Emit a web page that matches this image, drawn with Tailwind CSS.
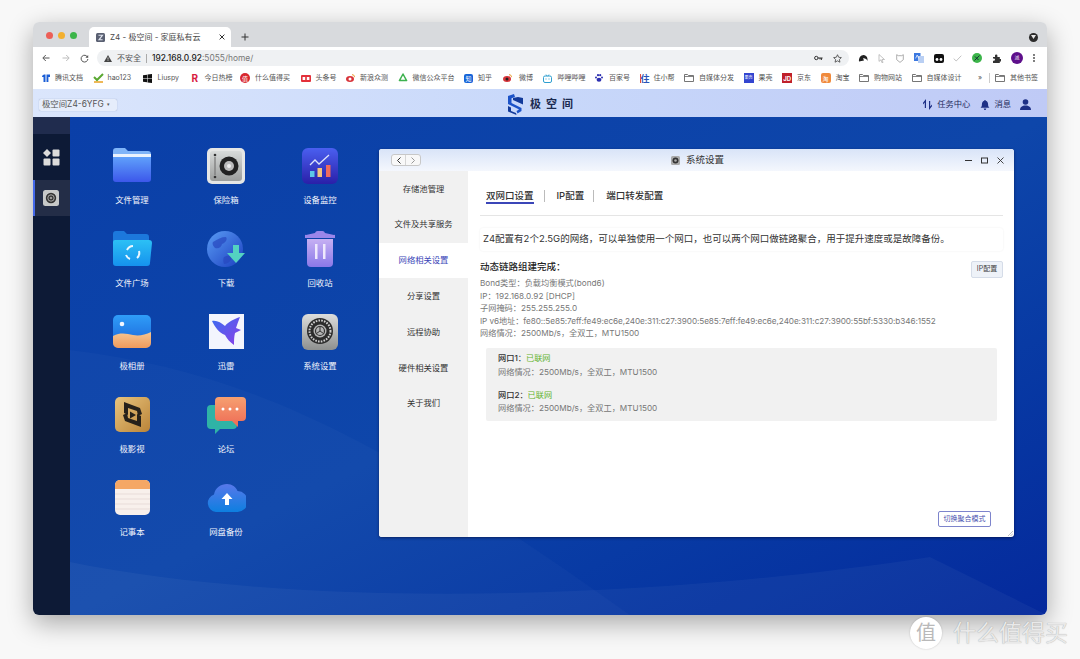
<!DOCTYPE html>
<html lang="zh-CN">
<head>
<meta charset="UTF-8">
<title>Z4 - 极空间 - 家庭私有云</title>
<script src="https://cdn.jsdelivr.net/npm/@tailwindcss/browser@4"></script>
</head>
<body class="bg-[#f8f8f8] font-['Inter','Noto_Sans_CJK_SC',sans-serif] overflow-hidden">
<div class="relative w-[1080px] h-[659px] pt-[22px] pl-[33px] overflow-hidden">

  <!-- Browser window -->
  <div class="w-[1014px] h-[593px] rounded-[6px] overflow-hidden flex flex-col shadow-[0_8px_26px_rgba(0,0,0,0.33)]">

    <!-- Tab strip -->
    <div class="h-[25px] bg-[#d8dadd] flex items-end shrink-0 relative">
      <div class="flex gap-[5px] items-center absolute left-[12.5px] top-[9.5px]">
        <span class="w-[7px] h-[7px] rounded-full bg-[#ec5f57]"></span>
        <span class="w-[7px] h-[7px] rounded-full bg-[#f3b02f]"></span>
        <span class="w-[7px] h-[7px] rounded-full bg-[#3cb54a]"></span>
      </div>
      <div class="ml-[56px] w-[142px] h-[20px] bg-white rounded-t-[5px] flex items-center pl-[7px] pr-[6px]">
        <svg class="w-[9px] h-[9px]" viewBox="0 0 9 9"><rect width="9" height="9" rx="1.5" fill="#5a6072"/><path d="M2.5 2.2h4L3 6.8h3.6" stroke="#dfe3ee" stroke-width="1.1" fill="none"/></svg>
        <span class="ml-[5px] text-[8px] text-[#4a4a4a] flex-1 whitespace-nowrap">Z4 - 极空间 - 家庭私有云</span>
        <svg class="w-[6px] h-[6px]" viewBox="0 0 6 6"><path d="M.6.6l4.8 4.8M5.4.6L.6 5.4" stroke="#333" stroke-width="1"/></svg>
      </div>
      <svg class="ml-[10px] mb-[6px] w-[8px] h-[8px]" viewBox="0 0 8 8"><path d="M4 .5v7M.5 4h7" stroke="#333" stroke-width="1"/></svg>
      <span class="absolute right-[9px] top-[10.5px] w-[9px] h-[9px] rounded-full bg-[#2b2b2b] flex items-center justify-center">
        <svg class="w-[5px] h-[4px]" viewBox="0 0 5 4"><path d="M0 0h5L2.5 4z" fill="#e8e8e8"/></svg>
      </span>
    </div>

    <!-- Address bar -->
    <div class="h-[20px] bg-white flex items-center shrink-0 pt-[2px] pl-[9px] pr-[12px]">
      <svg class="w-[8px] h-[8px]" viewBox="0 0 8 8"><path d="M7.5 4H1M3.8 1L.8 4l3 3" stroke="#555" stroke-width="1" fill="none"/></svg>
      <svg class="ml-[12px] w-[8px] h-[8px]" viewBox="0 0 8 8"><path d="M.5 4H7M4.2 1l3 3-3 3" stroke="#bcbcbc" stroke-width="1" fill="none"/></svg>
      <svg class="ml-[10px] w-[9px] h-[9px]" viewBox="0 0 9 9"><path d="M7.6 3.2A3.4 3.4 0 1 0 7.9 5" stroke="#555" stroke-width="1" fill="none"/><path d="M8.2 .9v2.8H5.4z" fill="#555"/></svg>
      <div class="ml-[8px] w-[752px] h-[16px] rounded-full bg-[#eff1f3] flex items-center pl-[7px] pr-[7px]">
        <svg class="w-[8px] h-[7px]" viewBox="0 0 8 7"><path d="M4 0l4 7H0z" fill="#444"/><path d="M4 2.4v2.2M4 5.2v.7" stroke="#fff" stroke-width=".7"/></svg>
        <span class="ml-[5px] text-[8px] text-[#555]">不安全</span>
        <span class="ml-[5px] w-px h-[9px] bg-[#aaa]"></span>
        <span class="ml-[5px] text-[8.4px] text-[#777] flex-1"><span class="text-[#222] font-medium">192.168.0.92</span>:5055/home/</span>
        <svg class="w-[9px] h-[6px]" viewBox="0 0 9 6"><circle cx="2.3" cy="3" r="1.7" fill="none" stroke="#333" stroke-width="1"/><path d="M4 3h4.600M7.400 3v2M6 3v1.400" stroke="#333" stroke-width="1"/></svg>
        <svg class="ml-[10px] w-[9px] h-[9px]" viewBox="0 0 10 10"><path d="M5 .8l1.300 2.800 3 .4-2.200 2.100.6 3L5 7.600 2.300 9.100l.6-3L.7 4l3-.4z" fill="none" stroke="#444" stroke-width=".9"/></svg>
      </div>
      <div class="ml-[9px] flex items-center flex-1 justify-between">
        <svg class="w-[10px] h-[8px]" viewBox="0 0 10 8"><path d="M1 7.500C.5 3.500 3.500.5 6.500 1.200 9 1.800 9.800 4 9.500 7 8.800 5 7 4 5 4.300L6 6.500z" fill="#222"/></svg>
        <svg class="w-[8px] h-[9px]" viewBox="0 0 8 9"><path d="M1 .5l5.500 5H4l1 3-1 .3-1-3-2 1.600z" fill="none" stroke="#aaa" stroke-width=".7"/></svg>
        <svg class="w-[8px] h-[9px]" viewBox="0 0 8 9"><path d="M.7.7l1.600 1h3.400L7.300.7v5L4 8.400.7 5.700z" fill="none" stroke="#999" stroke-width=".8"/></svg>
        <svg class="w-[10px] h-[10px]" viewBox="0 0 10 10"><rect width="6.500" height="8" fill="#3b78e0"/><rect x="4" y="3" width="6" height="7" fill="#b9cff3"/><path d="M1.600 5.400L3.200 2l1.500 3.400" stroke="#fff" stroke-width=".7" fill="none"/></svg>
        <svg class="w-[10px] h-[9px]" viewBox="0 0 10 9"><rect width="10" height="9" rx="2" fill="#111"/><circle cx="3" cy="5.500" r="1.400" fill="#fff"/><circle cx="7" cy="5.500" r="1.400" fill="#fff"/></svg>
        <svg class="w-[9px] h-[7px]" viewBox="0 0 9 7"><path d="M.7 3.600L3.200 6 8.300.7" fill="none" stroke="#bbb" stroke-width=".9"/></svg>
        <span class="w-[10px] h-[10px] rounded-full bg-[#3cb54a] flex items-center justify-center"><svg class="w-[6px] h-[6px]" viewBox="0 0 6 6"><path d="M.5 5.500L5.500.5M1 1.500l3.500 3.500" stroke="#123" stroke-width=".9"/></svg></span>
        <svg class="w-[9px] h-[9px]" viewBox="0 0 9 9"><path d="M1 3h2V1.600a1.200 1.200 0 0 1 2.400 0V3h2.400v2h1a1.200 1.200 0 0 1 0 2.400h-1V9H1V6.800h.8a1.200 1.200 0 0 0 0-2.400H1z" fill="#333"/></svg>
        <span class="w-[12px] h-[12px] rounded-full bg-[#5e0f8b] text-white text-[5px] flex items-center justify-center">派</span>
        <svg class="w-[2px] h-[8px]" viewBox="0 0 2 8"><circle cx="1" cy="1" r=".9" fill="#444"/><circle cx="1" cy="4" r=".9" fill="#444"/><circle cx="1" cy="7" r=".9" fill="#444"/></svg>
      </div>
    </div>

    <!-- Bookmarks -->
    <div class="h-[22px] bg-white flex items-center shrink-0 pl-[9px] text-[7px] text-[#555] whitespace-nowrap relative">
      <div class="flex items-center gap-[9.5px]">
        <span class="flex items-center gap-[5px]"><svg class="w-[8px] h-[8px]" viewBox="0 0 8 8"><path d="M0 3C0 1 1.500.5 3.500.5V8H1.500V3zM4.500.5H8v2.600H6.400V8H4.500z" fill="#1b5ed6"/></svg>腾讯文档</span>
        <span class="flex items-center gap-[3px]"><svg class="w-[12px] h-[10px]" viewBox="0 0 12 10"><path d="M1 4l3 3 6-6" stroke="#5aa832" stroke-width="2" fill="none"/><path d="M1 9h9" stroke="#e8a020" stroke-width="1.400"/></svg>hao123</span>
        <span class="ml-[3px] flex items-center gap-[5px]"><svg class="w-[9px] h-[9px]" viewBox="0 0 9 9"><path d="M0 1.300l4-.6v3.500H0zM4.500.6L9 0v4.200H4.500zM0 4.700h4v3.600l-4-.6zM4.500 4.700H9V9l-4.500-.6z" fill="#111"/></svg>Liuspy</span>
        <span class="ml-[3px] flex items-center gap-[5px]"><span class="w-[8px] text-[#d8203f] text-[10px] leading-none font-bold">R</span>今日热榜</span>
        <span class="-ml-[2px] flex items-center gap-[5px]"><span class="w-[10px] h-[10px] rounded-full bg-[#d8272e] text-white text-[6px] flex items-center justify-center">值</span>什么值得买</span>
        <span class="ml-[1px] flex items-center gap-[5px]"><svg class="w-[10px] h-[7px]" viewBox="0 0 10 7"><rect width="10" height="7" rx="1" fill="#e3303a"/><rect x="1.600" y="2" width="2.600" height="3" fill="#fff"/><rect x="5.800" y="2" width="2.600" height="3" fill="#fff"/></svg>头条号</span>
        <span class="flex items-center gap-[5px]"><svg class="w-[9px] h-[8px]" viewBox="0 0 9 8"><ellipse cx="4" cy="5" rx="4" ry="3" fill="#d8343a"/><circle cx="4" cy="5" r="1.500" fill="#fff"/><path d="M6 .6a2.600 2.600 0 0 1 2.600 2.600" stroke="#e89520" stroke-width=".9" fill="none"/></svg>新浪众测</span>
        <span class="flex items-center gap-[5px]"><svg class="w-[10px] h-[10px]" viewBox="0 0 10 10"><path d="M5 1l3.600 6.600H1.400z" fill="none" stroke="#3eb24f" stroke-width="1.500" stroke-linejoin="round"/></svg>微信公众平台</span>
        <span class="flex items-center gap-[5px]"><span class="w-[9px] h-[9px] rounded-[2px] bg-[#1764d8] text-white text-[6px] flex items-center justify-center">知</span>知乎</span>
        <span class="ml-[1.5px] flex items-center gap-[7px]"><svg class="w-[9px] h-[8px]" viewBox="0 0 9 8"><ellipse cx="4" cy="5" rx="4" ry="3" fill="#d8343a"/><circle cx="4" cy="5" r="1.500" fill="#222"/><path d="M6 .6a2.600 2.600 0 0 1 2.600 2.600" stroke="#e89520" stroke-width=".9" fill="none"/></svg>微博</span>
        <span class="flex items-center gap-[6px]"><svg class="w-[9px] h-[9px]" viewBox="0 0 9 9"><path d="M3 .5l1 1.700M6 .5L5 2.200" stroke="#2e9fd0" stroke-width=".8"/><rect x=".5" y="2" width="8" height="6.500" rx="1.500" fill="none" stroke="#2e9fd0" stroke-width="1"/><path d="M3 4.500v1M6 4.500v1" stroke="#2e9fd0"/></svg>哔哩哔哩</span>
        <span class="flex items-center gap-[6px]"><svg class="w-[8px] h-[8px]" viewBox="0 0 8 8"><circle cx="1" cy="3.600" r="1" fill="#2c2fb0"/><circle cx="3" cy="1.200" r="1.100" fill="#2c2fb0"/><circle cx="5.200" cy="1.200" r="1.100" fill="#2c2fb0"/><circle cx="7" cy="3.600" r="1" fill="#2c2fb0"/><ellipse cx="4" cy="5.800" rx="2.400" ry="2" fill="#2c2fb0"/></svg>百家号</span>
        <span class="flex items-center gap-[5px]"><span class="w-[9px] text-[#2b55b8] text-[9px] leading-none font-bold border-l border-[#e0503a]">住</span>住小帮</span>
        <span class="flex items-center gap-[5px]"><svg class="w-[10px] h-[8px]" viewBox="0 0 10 8"><path d="M.5 7.500V.5h3l1 1h5v6z" fill="none" stroke="#666" stroke-width=".9"/><path d="M.5 2.500h9" stroke="#666" stroke-width=".8"/></svg>自媒体分发</span>
        <span class="flex items-center gap-[5px]"><span class="w-[10px] h-[10px] bg-[#3345d0] text-white text-[4px] flex items-center justify-center">果壳</span>果壳</span>
        <span class="flex items-center gap-[5px]"><span class="w-[10px] h-[10px] bg-[#c0202a] text-white text-[6px] font-bold flex items-center justify-center">JD</span>京东</span>
        <span class="flex items-center gap-[5px]"><span class="w-[10px] h-[10px] rounded-[2px] bg-[#f08a3c] text-white text-[6px] flex items-center justify-center">淘</span>淘宝</span>
        <span class="flex items-center gap-[5px]"><svg class="w-[10px] h-[8px]" viewBox="0 0 10 8"><path d="M.5 7.500V.5h3l1 1h5v6z" fill="none" stroke="#666" stroke-width=".9"/><path d="M.5 2.500h9" stroke="#666" stroke-width=".8"/></svg>购物网站</span>
        <span class="flex items-center gap-[5px]"><svg class="w-[10px] h-[8px]" viewBox="0 0 10 8"><path d="M.5 7.500V.5h3l1 1h5v6z" fill="none" stroke="#666" stroke-width=".9"/><path d="M.5 2.500h9" stroke="#666" stroke-width=".8"/></svg>自媒体设计</span>
      </div>
      <div class="absolute right-[9px] top-0 h-full flex items-center">
        <span class="text-[7px] mr-[7px]">»</span>
        <span class="w-px h-[10px] bg-[#ccc] mr-[5px]"></span>
        <svg class="w-[10px] h-[8px] mr-[5px]" viewBox="0 0 10 8"><path d="M.5 7.500V.5h3l1 1h5v6z" fill="none" stroke="#666" stroke-width=".9"/><path d="M.5 2.500h9" stroke="#666" stroke-width=".8"/></svg>其他书签
      </div>
    </div>

    <!-- App header -->
    <div class="h-[28px] shrink-0 bg-gradient-to-r from-[#dbe6fc] via-[#c8d8fa] to-[#bfcaf6] flex items-center justify-between pt-[3px] pl-[6px] pr-[16px] relative">
      <div class="w-[78px] h-[12px] rounded-[2px] bg-[#e6edfb] shadow-[0_0_1px_rgba(60,80,130,0.5)] flex items-center pl-[3px] text-[8.4px] text-[#555] whitespace-nowrap">极空间Z4-6YFG<span class="ml-[3px] text-[5px]">▾</span></div>
      <div class="absolute left-[475px] top-[5px] flex items-center">
        <svg class="w-[15px] h-[21px]" viewBox="0 0 15 21"><path d="M0 2l6-2 1 3-3.500 1.200V9l10 5v3l-4 2.500-1-2.500 2.200-1.200v-.6L0 10z" fill="#1c53c8"/><path d="M15 4v6.500L5 6V4l5-1zM0 12l3 1.500V17l5 2 .5 2L0 17.500z" fill="#123a9a"/></svg>
        <span class="ml-[7px] text-[11px] font-bold text-[#1b2a50] tracking-[5px]">极空间</span>
      </div>
      <div class="flex items-center text-[8.3px] text-[#1d2a5c]">
        <svg class="w-[9px] h-[11px]" viewBox="0 0 9 11"><path d="M3 0v9H1.800V3.500L0 5.500V3.700zM6 11V2h1.200v5.500L9 5.500v1.800z" fill="#1d2f86"/></svg>
        <span class="ml-[5px]">任务中心</span>
        <svg class="ml-[10px] w-[10px] h-[10px]" viewBox="0 0 9 10"><path d="M4.500 0c.5 0 .8.400.8.800C7 1.300 7.600 2.800 7.600 4.500c0 1.800.5 2.500 1.400 3.300H0c.9-.8 1.400-1.500 1.400-3.300 0-1.700.6-3.200 2.300-3.700 0-.4.300-.8.800-.8zM3.200 8.500h2.600c0 .8-.6 1.500-1.300 1.500s-1.300-.7-1.300-1.500z" fill="#1d2f86"/></svg>
        <span class="ml-[4px]">消息</span>
        <svg class="ml-[9px] w-[11px] h-[11px]" viewBox="0 0 11 11"><circle cx="5.500" cy="3" r="2.800" fill="#1d2f86"/><path d="M0 11c0-3 2.200-4.500 5.500-4.500S11 8 11 11z" fill="#1d2f86"/></svg>
      </div>
    </div>

    <!-- Desktop -->
    <div class="flex-1 flex relative min-h-0">
      <div class="w-[37px] shrink-0 bg-[#0d1a36] flex flex-col">
        <div class="h-[17px] bg-[#202c4e]"></div>
        <div class="h-[46px] flex items-center justify-center">
          <svg class="w-[17px] h-[17px]" viewBox="0 0 17 17"><path d="M4 0l4 4-4 4-4-4z" fill="#dcdcdc"/><rect x="9.500" y=".5" width="7" height="7" rx="1" fill="#dcdcdc"/><rect x=".5" y="9.500" width="7" height="7" rx="1" fill="#dcdcdc"/><rect x="9.500" y="9.500" width="7" height="7" rx="1" fill="#dcdcdc"/></svg>
        </div>
        <div class="h-[36px] bg-[#232d47] border-l-2 border-[#4468e8] flex items-center justify-center pr-[4px]">
          <svg class="w-[16px] h-[16px]" viewBox="0 0 16 16"><rect width="16" height="16" rx="2.500" fill="#c7c9c9"/><circle cx="8" cy="8" r="5.200" fill="#333"/><circle cx="8" cy="8" r="3.200" fill="none" stroke="#aaa" stroke-width="1"/><circle cx="8" cy="8" r="1.300" fill="#999"/></svg>
        </div>
      </div>
      <div class="flex-1 relative overflow-hidden bg-gradient-to-br from-[#0a3fa8] via-[#0e46aa] to-[#05299c]">
        <svg class="absolute inset-0 w-full h-full" viewBox="0 0 977 498" preserveAspectRatio="none">
          <path d="M0 233C180 255 310 320 560 498H0z" fill="#fff" fill-opacity=".025"/>
          <path d="M0 445C250 495 600 480 860 440L977 498H0z" fill="#fff" fill-opacity=".04"/>
        </svg>

        <!-- App icons -->
        <div class="relative grid grid-cols-[94px_94px_94px] auto-rows-[83px] pl-[15px] pt-[31px] text-[8.4px] text-[#f2f5fc] text-center">
          <div class="flex flex-col items-center">
            <svg class="w-[38px] h-[36px]" viewBox="0 0 38 36"><defs><linearGradient id="f1" x1="0" y1="0" x2="0" y2="1"><stop offset="0" stop-color="#5fa0fb"/><stop offset="1" stop-color="#3c57ea"/></linearGradient></defs><path d="M0 3a3 3 0 0 1 3-3h9l3 3h20a3 3 0 0 1 3 3v2H0z" fill="#7fb4f8"/><rect y="6" width="38" height="4" fill="#eaf2fd"/><path d="M0 9h38v22a3 3 0 0 1-3 3H3a3 3 0 0 1-3-3z" fill="url(#f1)"/></svg>
            <span class="mt-[10px]">文件管理</span>
          </div>
          <div class="flex flex-col items-center">
            <svg class="w-[38px] h-[36px]" viewBox="0 0 38 36"><defs><linearGradient id="s1" x1="0" y1="0" x2="0" y2="1"><stop offset="0" stop-color="#d8dbda"/><stop offset="1" stop-color="#9b9d9c"/></linearGradient></defs><rect width="38" height="36" rx="5" fill="#e5e6e5"/><rect x="3" y="3" width="32" height="30" rx="3" fill="url(#s1)"/><circle cx="22" cy="18" r="9.500" fill="#222"/><circle cx="22" cy="18" r="5" fill="#bbb"/><circle cx="22" cy="18" r="2" fill="#eee"/><circle cx="8" cy="7" r="1.300" fill="#333"/><circle cx="8" cy="29" r="1.300" fill="#333"/><rect x="7.400" y="9" width="1.200" height="18" fill="#777"/></svg>
            <span class="mt-[10px]">保险箱</span>
          </div>
          <div class="flex flex-col items-center">
            <svg class="w-[36px] h-[36px]" viewBox="0 0 36 36"><defs><linearGradient id="m1" x1="0" y1="0" x2="0" y2="1"><stop offset="0" stop-color="#4a5ff0"/><stop offset="1" stop-color="#2a1fa8"/></linearGradient></defs><rect width="36" height="36" rx="6" fill="url(#m1)"/><rect x="8" y="23" width="4.500" height="6" fill="#5dc7e8"/><rect x="15.500" y="20" width="4.500" height="9" fill="#f3c27d"/><rect x="24" y="17" width="4.500" height="12" fill="#ef6b5e"/><path d="M8 17l5-5 4 4 10-9" fill="none" stroke="#dde3fb" stroke-width="1.300"/></svg>
            <span class="mt-[10px]">设备监控</span>
          </div>

          <div class="flex flex-col items-center">
            <svg class="w-[39px] h-[36px]" viewBox="0 0 39 36"><defs><linearGradient id="f2" x1="0" y1="0" x2="0" y2="1"><stop offset="0" stop-color="#2cc0f5"/><stop offset="1" stop-color="#1592ee"/></linearGradient></defs><path d="M0 3a3 3 0 0 1 3-3h8l3 3h19a3 3 0 0 1 3 3v8H0z" fill="#1c78dc"/><path d="M2 9h34a3 3 0 0 1 3 3l-2 20a3 3 0 0 1-3 3H3a3 3 0 0 1-3-3V11a2 2 0 0 1 2-2z" fill="url(#f2)"/><path d="M14 19a7 7 0 0 1 6-4M26 20a7 7 0 0 1-2 7M17 28a7 7 0 0 1-4-4" fill="none" stroke="#eaf7ff" stroke-width="2"/></svg>
            <span class="mt-[10px]">文件广场</span>
          </div>
          <div class="flex flex-col items-center">
            <svg class="w-[38px] h-[38px] -mt-[1px]" viewBox="0 0 38 38"><defs><linearGradient id="g1" x1="0" y1="0" x2="1" y2="1"><stop offset="0" stop-color="#5a9cf4"/><stop offset="1" stop-color="#1b3fc0"/></linearGradient></defs><circle cx="18" cy="19" r="18" fill="url(#g1)"/><path d="M6 12c5-3 8-5 13-5 2 3-1 6-4 7-1 4-4 5-7 4-2-2-3-4-2-6zM17 27c3-2 6-2 8 0-1 4-4 7-8 7-1-3-1-5 0-7z" fill="#2747bf" fill-opacity=".7"/><path d="M26 15h6v8h6l-9 10-9-10h6z" fill="#53d2c1"/></svg>
            <span class="mt-[9px]">下载</span>
          </div>
          <div class="flex flex-col items-center">
            <svg class="w-[30px] h-[36px]" viewBox="0 0 30 36"><defs><linearGradient id="t1" x1="0" y1="0" x2="0" y2="1"><stop offset="0" stop-color="#c6b0f3"/><stop offset="1" stop-color="#8a78e8"/></linearGradient></defs><path d="M10 2a3 3 0 0 1 3-2h4a3 3 0 0 1 3 2l9 2a1 1 0 0 1 1 2v1H0V6a1 1 0 0 1 1-2z" fill="#9a86ea"/><path d="M2 8h26v24a4 4 0 0 1-4 4H6a4 4 0 0 1-4-4z" fill="url(#t1)"/><rect x="10" y="13" width="2.500" height="15" fill="#efe9fd"/><rect x="18" y="13" width="2.500" height="15" fill="#efe9fd"/></svg>
            <span class="mt-[10px]">回收站</span>
          </div>

          <div class="flex flex-col items-center">
            <svg class="w-[38px] h-[33px] mt-[1px] mb-[2px]" viewBox="0 0 38 33"><defs><linearGradient id="p1" x1="0" y1="0" x2="0" y2="1"><stop offset="0" stop-color="#2f9df8"/><stop offset="1" stop-color="#1a62d8"/></linearGradient><linearGradient id="p2" x1="0" y1="0" x2="0" y2="1"><stop offset="0" stop-color="#f5c692"/><stop offset="1" stop-color="#ef9a5c"/></linearGradient></defs><rect width="38" height="33" rx="5" fill="url(#p1)"/><circle cx="9" cy="9" r="2.300" fill="#f2f7ff"/><path d="M0 21c8-4 14-2 20-1s12 0 18-3v11a5 5 0 0 1-5 5H5a5 5 0 0 1-5-5z" fill="url(#p2)"/></svg>
            <span class="mt-[10px]">极相册</span>
          </div>
          <div class="flex flex-col items-center">
            <svg class="w-[35px] h-[35px]" viewBox="0 0 35 35"><defs><linearGradient id="b1" x1="0" y1="0" x2="1" y2="1"><stop offset="0" stop-color="#3a6cf0"/><stop offset="1" stop-color="#8a3fe8"/></linearGradient></defs><rect width="35" height="35" fill="#f3f5fd"/><path d="M3 7C8 6 12 9 16 12 19 8 25 5 31 3 29 8 28 11 27 14L32 16 26 19C25 23 25 27 25 31 21 28 18 25 16 21 10 19 6 13 3 7z" fill="url(#b1)"/></svg>
            <span class="mt-[11px]">迅雷</span>
          </div>
          <div class="flex flex-col items-center">
            <svg class="w-[36px] h-[36px]" viewBox="0 0 36 36"><defs><linearGradient id="c1" x1="0" y1="0" x2="0" y2="1"><stop offset="0" stop-color="#dcdddc"/><stop offset="1" stop-color="#8e908f"/></linearGradient></defs><rect width="36" height="36" rx="6" fill="url(#c1)"/><circle cx="18" cy="17" r="13" fill="#2c2c2c"/><circle cx="18" cy="17" r="10.500" fill="none" stroke="#cfcfcf" stroke-width="2" stroke-dasharray="1.600 1.200"/><circle cx="18" cy="17" r="6.500" fill="#b5b5b5"/><circle cx="18" cy="17" r="4.500" fill="none" stroke="#333" stroke-width="1.200"/><path d="M18 17v-4M18 17l-3.500 2.500M18 17l3.500 2.500" stroke="#333" stroke-width="1"/></svg>
            <span class="mt-[10px]">系统设置</span>
          </div>

          <div class="flex flex-col items-center">
            <svg class="w-[35px] h-[35px]" viewBox="0 0 35 35"><defs><linearGradient id="v1" x1="0" y1="0" x2="1" y2="1"><stop offset="0" stop-color="#e8c47e"/><stop offset="1" stop-color="#bb8438"/></linearGradient></defs><rect width="35" height="35" rx="5" fill="url(#v1)"/><path d="M9 5l16 6 2 6-4 2-1-5-9-3v7l-4-2z" fill="#27211a"/><path d="M26 30l-16-6-2-6 4-2 1 5 9 3v-7l4 2z" fill="#27211a"/><path d="M15 14.500l6 3.500-6 3.500z" fill="#27211a"/></svg>
            <span class="mt-[11px]">极影视</span>
          </div>
          <div class="flex flex-col items-center relative">
            <svg class="w-[39px] h-[37px]" viewBox="0 0 39 37"><defs><linearGradient id="o1" x1="0" y1="0" x2="0" y2="1"><stop offset="0" stop-color="#f6a070"/><stop offset="1" stop-color="#ee6a55"/></linearGradient></defs><path d="M4 8h22a4 4 0 0 1 4 4v16a4 4 0 0 1-4 4H13l-5 5v-5H4a4 4 0 0 1-4-4V12a4 4 0 0 1 4-4z" fill="#2fb3a6"/><path d="M12 0h23a4 4 0 0 1 4 4v16a4 4 0 0 1-4 4h-4v6l-6-6H12a4 4 0 0 1-4-4V4a4 4 0 0 1 4-4z" fill="url(#o1)"/><circle cx="16" cy="12" r="1.500" fill="#fff"/><circle cx="23" cy="12" r="1.500" fill="#fff"/><circle cx="30" cy="12" r="1.500" fill="#fff"/></svg>
            <span class="mt-[9px]">论坛</span>
          </div>
          <div></div>

          <div class="flex flex-col items-center">
            <svg class="w-[35px] h-[35px]" viewBox="0 0 35 35"><rect width="35" height="35" rx="5" fill="#f8f0ec"/><path d="M0 5a5 5 0 0 1 5-5h25a5 5 0 0 1 5 5v4H0z" fill="#f5a765"/><path d="M0 14h35M0 19h35M0 24h35M0 29h35" stroke="#e8dcd9" stroke-width="1"/></svg>
            <span class="mt-[11px]">记事本</span>
          </div>
          <div class="flex flex-col items-center">
            <svg class="w-[39px] h-[28px] mt-[4px] mb-[3px]" viewBox="0 0 39 28"><defs><linearGradient id="k1" x1="0" y1="0" x2="0" y2="1"><stop offset="0" stop-color="#5878ea"/><stop offset="1" stop-color="#0d7fe0"/></linearGradient></defs><path d="M9 28a9 9 0 0 1-2-17.500C8 4 14 0 20 0c5 0 9 3 10.500 7A10.500 10.500 0 0 1 30 28z" fill="url(#k1)"/><path d="M20 9l5.500 6H22v6h-4v-6h-3.500z" fill="#fff"/></svg>
            <span class="mt-[11px]">网盘备份</span>
          </div>
        </div>

        <!-- Settings window -->
        <div class="absolute left-[309px] top-[32px] w-[635px] h-[388px] rounded-[3px] overflow-hidden bg-white flex flex-col shadow-[0_1px_3px_rgba(0,0,30,0.5)]">
          <div class="h-[22px] shrink-0 bg-gradient-to-b from-[#d9e4f8] to-[#f4f7fd] flex items-center relative">
            <div class="ml-[12px] w-[30px] h-[12px] rounded-[3px] border border-[#c8c8c8] bg-[#f8f8f8] flex">
              <span class="w-1/2 border-r border-[#d5d5d5] flex items-center justify-center"><svg class="w-[4px] h-[7px]" viewBox="0 0 4 7"><path d="M3.500.5l-3 3 3 3" stroke="#333" fill="none"/></svg></span>
              <span class="w-1/2 flex items-center justify-center"><svg class="w-[4px] h-[7px]" viewBox="0 0 4 7"><path d="M.5.5l3 3-3 3" stroke="#999" fill="none"/></svg></span>
            </div>
            <div class="absolute left-[292px] top-[0.5px] h-full flex items-center text-[9.5px] text-[#333]">
              <svg class="w-[9px] h-[9px] mr-[6px]" viewBox="0 0 9 9"><rect width="9" height="9" rx="1.500" fill="#aaa"/><circle cx="4.500" cy="4.500" r="3" fill="#333"/><circle cx="4.500" cy="4.500" r="1.300" fill="#aaa"/></svg>系统设置
            </div>
            <div class="ml-auto mr-[10px] flex items-center gap-[9px]">
              <svg class="w-[7px] h-[7px]" viewBox="0 0 7 7"><path d="M0 3.500h7" stroke="#333" stroke-width="1.200"/></svg>
              <svg class="w-[7px] h-[7px]" viewBox="0 0 7 7"><rect x=".5" y="1" width="6" height="5" fill="none" stroke="#333" stroke-width="1"/></svg>
              <svg class="w-[7px] h-[7px]" viewBox="0 0 7 7"><path d="M.5.5l6 6M6.500.5l-6 6" stroke="#333" stroke-width=".9"/></svg>
            </div>
          </div>
          <div class="flex-1 flex min-h-0">
            <div class="w-[89px] shrink-0 bg-[#f1f1f1] text-[8.3px] text-[#333] text-center">
              <div class="h-[35.8px] flex items-center justify-center">存储池管理</div>
              <div class="h-[35.8px] flex items-center justify-center">文件及共享服务</div>
              <div class="h-[35.8px] flex items-center justify-center bg-white text-[#3b46b8]">网络相关设置</div>
              <div class="h-[35.8px] flex items-center justify-center">分享设置</div>
              <div class="h-[35.8px] flex items-center justify-center">远程协助</div>
              <div class="h-[35.8px] flex items-center justify-center">硬件相关设置</div>
              <div class="h-[35.8px] flex items-center justify-center">关于我们</div>
            </div>
            <div class="flex-1 pl-[12px] pr-[11px] relative">
              <div class="h-[45px] border-b border-[#e5e5e5] flex items-start pt-[18px] text-[9.5px] text-[#333] font-medium">
                <span class="ml-[6px] h-[15px] leading-[14px] border-b-2 border-[#3b46b8]">双网口设置</span>
                <span class="ml-[10px] mr-[12px] mt-px w-px h-[12px] bg-[#bbb]"></span>
                <span class="leading-[14px]">IP配置</span>
                <span class="ml-[9px] mr-[12px] mt-px w-px h-[12px] bg-[#bbb]"></span>
                <span class="leading-[14px]">端口转发配置</span>
              </div>
              <div class="mt-[12px] h-[23px] rounded-[3px] shadow-[0_0_2px_rgba(0,0,0,0.08)] flex items-center pl-[3px] text-[9.5px] text-[#333]">Z4配置有2个2.5G的网络，可以单独使用一个网口，也可以两个网口做链路聚合，用于提升速度或是故障备份。</div>
              <div class="mt-[9px] text-[9.5px] leading-[13px] text-[#222] font-medium">动态链路组建完成：</div>
              <div class="mt-[4px] text-[8.2px] leading-[12.5px] text-[#777] whitespace-nowrap">
                <div>Bond类型：负载均衡模式(bond6)</div>
                <div>IP：192.168.0.92 [DHCP]</div>
                <div>子网掩码：255.255.255.0</div>
                <div class="tracking-[-0.08px]">IP v6地址：fe80::5e85:7eff:fe49:ec6e,240e:311:c27:3900:5e85:7eff:fe49:ec6e,240e:311:c27:3900:55bf:5330:b346:1552</div>
                <div>网络情况：2500Mb/s，全双工，MTU1500</div>
              </div>
              <div class="mt-[8px] ml-[6px] mr-[6px] h-[73px] rounded-[2px] bg-[#f1f1f1] pl-[12px] pt-[4.5px] text-[8.2px] leading-[13.5px] text-[#777]">
                <div><span class="text-[#333] font-medium">网口1：</span><span class="text-[#63b32e]">已联网</span></div>
                <div>网络情况：2500Mb/s，全双工，MTU1500</div>
                <div class="mt-[9.5px]"><span class="text-[#333] font-medium">网口2：</span><span class="text-[#63b32e]">已联网</span></div>
                <div>网络情况：2500Mb/s，全双工，MTU1500</div>
              </div>
              <button class="absolute right-[11px] top-[90px] w-[32px] h-[17px] rounded-[2px] bg-[#eef2f8] border border-[#d5dce8] text-[7px] text-[#444] flex items-center justify-center">IP配置</button>
              <button class="absolute right-[23px] bottom-[10px] w-[53px] h-[16px] rounded-[2px] border border-[#7d84cc] text-[7px] text-[#4a52b0] flex items-center justify-center">切换聚合模式</button>
              <svg class="absolute right-[1px] bottom-[1px] w-[5px] h-[5px]" viewBox="0 0 5 5"><path d="M0 5l5-5M2.500 5L5 2.500" stroke="#aaa" stroke-width=".7"/></svg>
            </div>
          </div>
        </div>
      </div>
    </div>
  </div>

  <!-- Watermark -->
  <div class="absolute left-[910px] top-[616px] flex items-center">
    <span class="w-[32px] h-[32px] rounded-full bg-white flex items-center justify-center text-[20px] text-[#b9b9b9] shadow-[0_0_2px_rgba(0,0,0,0.2)]">值</span>
    <span class="ml-[11px] text-[23px] text-[#e9e9e9] [text-shadow:0_0_1px_rgba(0,0,0,0.35)]">什么值得买</span>
  </div>
</div>
</body>
</html>
